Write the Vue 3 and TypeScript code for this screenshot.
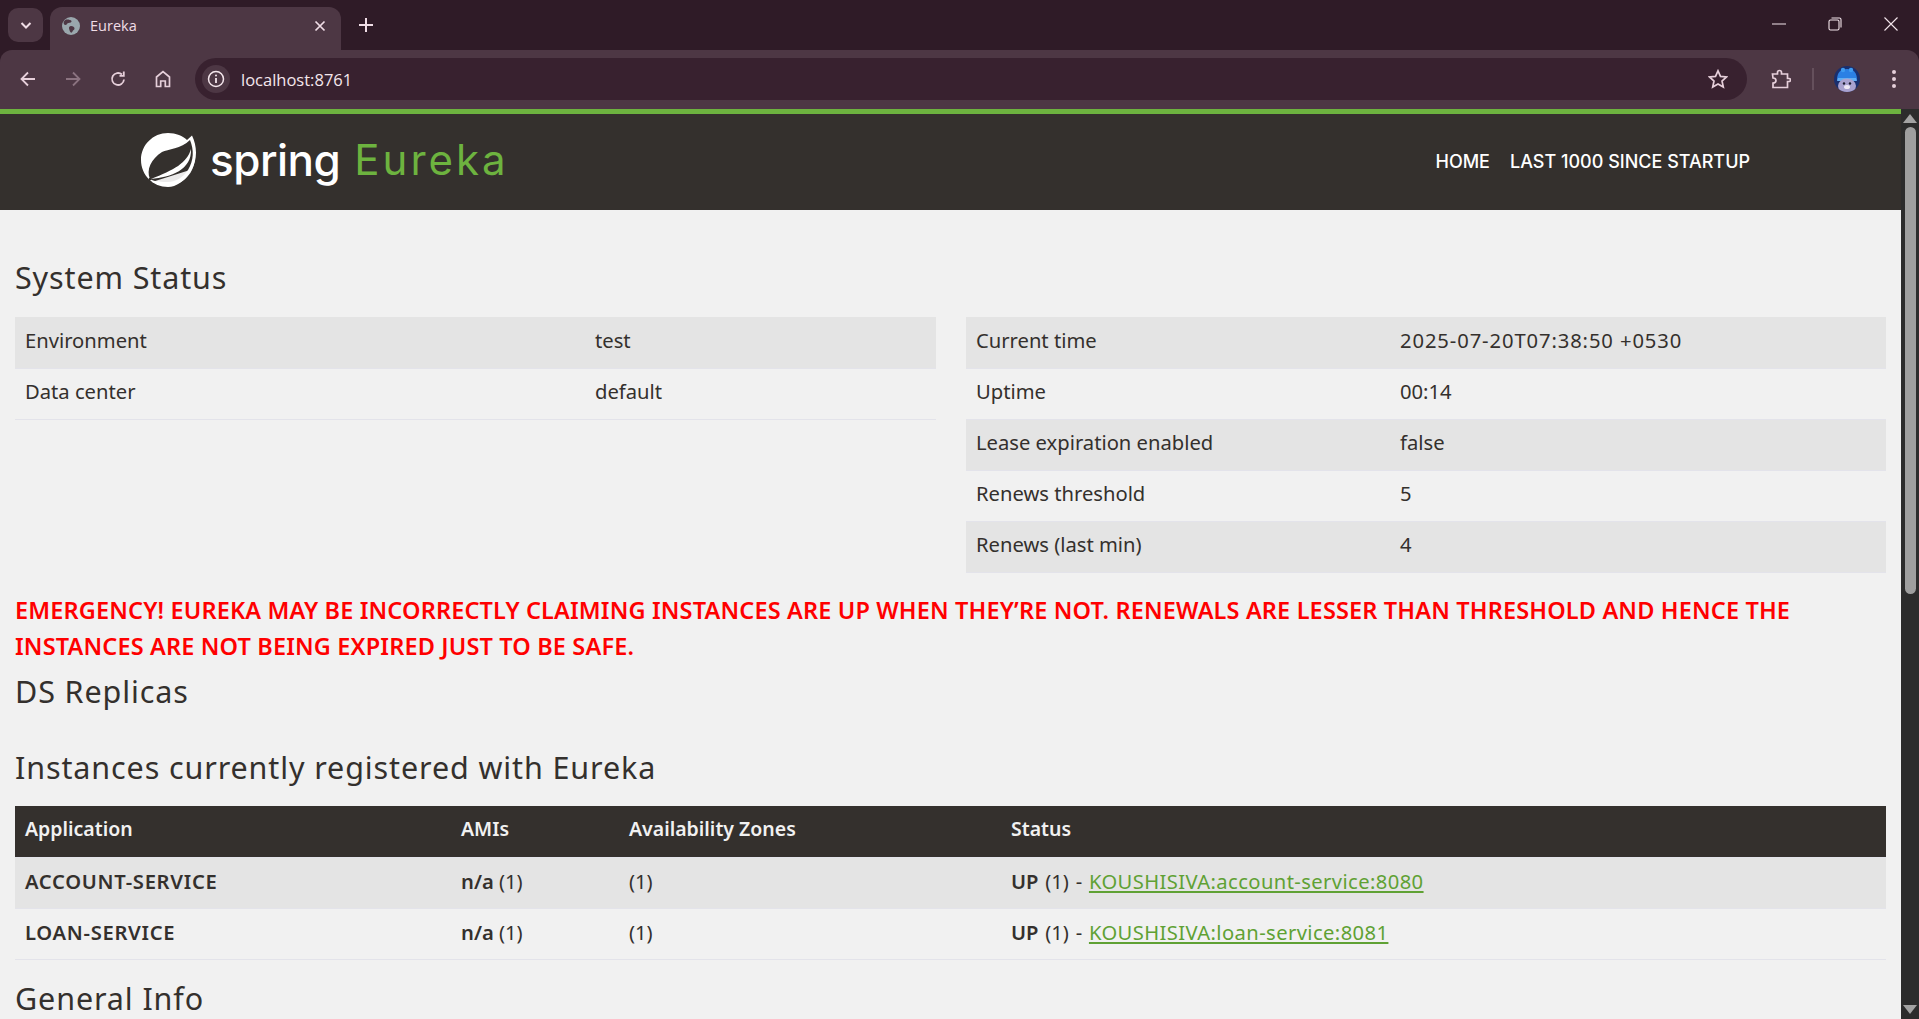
<template>
  <div class="window">
    <!-- browser chrome -->
    <div class="tabstrip">
      <button class="tab-search">
        <svg width="16" height="16" viewBox="0 0 16 16" fill="none" stroke="#f0dde6" stroke-width="2"><path d="M3.500 6 8 10.500 12.500 6" /></svg>
      </button>
      <div class="tab">
        <svg class="favicon" width="18" height="18" viewBox="0 0 18 18">
          <circle cx="9" cy="9" r="9" fill="#9aa7ad" />
          <path d="M5 2.500c2 0 4 .5 4.500 1.500S8 6 6.500 6 5 8 3.500 8 1 6 2 4.500 3.500 2.500 5 2.500ZM9 9c2 0 3.500 1 3.500 2.500S11 13 10.500 14.500 8.500 16 8 14.500 7 12 7 11s.5-2 2-2Z" fill="#4d3744" />
        </svg>
        <span class="tab-title">Eureka</span>
        <svg class="tab-close" width="12" height="12" viewBox="0 0 12 12" stroke="#f0dde6" stroke-width="1.700"><path d="M1.500 1.500 10.500 10.500M10.500 1.500 1.500 10.500" /></svg>
      </div>
      <svg class="new-tab" width="14" height="14" viewBox="0 0 14 14" stroke="#f0dde6" stroke-width="2"><path d="M7 0v14M0 7h14" /></svg>
      <div class="window-controls">
        <svg width="14" height="14" viewBox="0 0 14 14" stroke="#f4e6ec" stroke-width="1"><path d="M0 7h14" /></svg>
        <svg width="14" height="14" viewBox="0 0 14 14" fill="none" stroke="#f4e6ec" stroke-width="1.100"><rect x="1" y="3" width="10" height="10" rx="1.500" /><path d="M3.500 1h8a1.500 1.500 0 0 1 1.500 1.500v8" /></svg>
        <svg width="14" height="14" viewBox="0 0 14 14" stroke="#f4e6ec" stroke-width="1.100"><path d="M.5.500l13 13M13.500.5l-13 13" /></svg>
      </div>
    </div>

    <div class="toolbar">
      <div class="nav-icons">
        <svg width="18" height="18" viewBox="0 0 18 18" fill="none" stroke="#e6cfda" stroke-width="1.800"><path d="M16 9H2.500M9 2.500 2.500 9 9 15.500" /></svg>
        <svg width="18" height="18" viewBox="0 0 18 18" fill="none" stroke="#8b7380" stroke-width="1.800"><path d="M2 9h13.500M9 2.500 15.500 9 9 15.500" /></svg>
        <svg width="18" height="18" viewBox="0 0 18 18" fill="none" stroke="#e6cfda" stroke-width="1.800"><path d="M15 9.500A6 6 0 1 1 13 4.500" /><path d="M14.800 1.500v4.300h-4.300" /></svg>
        <svg width="18" height="18" viewBox="0 0 18 18" fill="none" stroke="#e6cfda" stroke-width="1.700"><path d="M2.500 16.500V7L9 1.500 15.500 7v9.500h-4.200v-5.500H6.700v5.500Z" /></svg>
      </div>
      <div class="omnibox">
        <span class="site-info">
          <svg width="18" height="18" viewBox="0 0 18 18" fill="none" stroke="#f4e6ec" stroke-width="1.500"><circle cx="9" cy="9" r="7.500" /><path d="M9 8v5" stroke-width="1.800" /><circle cx="9" cy="5.500" r="1" fill="#f4e6ec" stroke="none" /></svg>
        </span>
        <span class="url">localhost:8761</span>
        <svg class="star" width="20" height="20" viewBox="0 0 20 20" fill="none" stroke="#e6cfda" stroke-width="1.700"><path d="M10 1.800l2.500 5.600 6 .6-4.500 4 1.300 6L10 15l-5.300 3 1.300-6-4.500-4 6-.6Z" /></svg>
      </div>
      <div class="toolbar-right">
        <svg width="20" height="20" viewBox="0 0 20 20" fill="none" stroke="#e6cfda" stroke-width="1.700"><path d="M1.500 5h5V3.500a2 2 0 0 1 4 0V5h6v4.500h1.500a1.500 1.500 0 0 1 0 3H16.500V18.500H2v-4.500c2 0 3-1 3-2.500S3.500 9 2 9Z" /></svg>
        <span class="divider"></span>
        <svg class="avatar" width="26" height="26" viewBox="0 0 26 26">
          <defs><clipPath id="avatar-clip"><circle cx="13" cy="13" r="13" /></clipPath></defs>
          <g clip-path="url(#avatar-clip)">
            <rect width="26" height="26" fill="#1a2f6e" />
            <path d="M3 14C3 6 7 3 13 3s10 3 10 11Z" fill="#2b80e4" />
            <circle cx="9" cy="4" r="2.200" fill="#3f9bf0" />
            <circle cx="17" cy="4" r="2.200" fill="#3f9bf0" />
            <path d="M4 12h18l1 3H3Z" fill="#63aef2" />
            <ellipse cx="13" cy="20" rx="9" ry="7.500" fill="#a9a2cf" />
            <circle cx="10" cy="17.500" r="1.200" fill="#1c1c2e" />
            <circle cx="16" cy="17.500" r="1.200" fill="#1c1c2e" />
            <ellipse cx="13" cy="21" rx="3" ry="2" fill="#eee8f5" />
          </g>
        </svg>
        <svg class="menu-dots" width="6" height="20" viewBox="0 0 6 20" fill="#e6cfda"><circle cx="3" cy="3" r="2" /><circle cx="3" cy="10" r="2" /><circle cx="3" cy="17" r="2" /></svg>
      </div>
    </div>

    <div class="viewport">
      <div class="page">
        <header class="site-header">
          <div class="logo">
            <svg class="leaf" width="56" height="56" viewBox="0 0 56 56">
              <path d="M27 1C35 1 42 4 46 8L51 3.500C56 14 57 27 50 39 44 49 35 55 27 55 12 55 0 43 0 28 0 13 12 1 27 1Z" fill="#fff" />
              <path d="M9 47C5 38 10 27 21 20 27 17 40 17 49 8 53 18 53 28 47 38 42 46 34 50 27 50 21 50 14 50 9 47Z" fill="#34302d" />
              <path d="M50 17C46 31 33 38 10 47 30 45 51 38 50 17Z" fill="#fff" />
              <path d="M11 50 49 38 54 24C54 36 48 47 36 52L24 54Z" fill="#fff" opacity="0.900" />
              <circle cx="9" cy="47" r="1.300" fill="#34302d" />
            </svg>
            <span class="logo-spring">spring</span>
            <span class="logo-eureka">Eureka</span>
          </div>
          <nav class="site-nav">
            <a>HOME</a>
            <a>LAST 1000 SINCE STARTUP</a>
          </nav>
        </header>

        <main class="content">
          <h1>System Status</h1>
          <div class="status-grid">
            <table class="data-table env-table">
              <tbody>
                <tr v-for="row in envRows" :key="row[0]">
                  <td>{{ row[0] }}</td>
                  <td>{{ row[1] }}</td>
                </tr>
              </tbody>
            </table>
            <table class="data-table time-table">
              <tbody>
                <tr v-for="row in timeRows" :key="row[0]">
                  <td>{{ row[0] }}</td>
                  <td>{{ row[1] }}</td>
                </tr>
              </tbody>
            </table>
          </div>

          <h4 class="emergency">EMERGENCY! EUREKA MAY BE INCORRECTLY CLAIMING INSTANCES ARE UP WHEN THEY’RE NOT. RENEWALS ARE LESSER THAN THRESHOLD AND HENCE THE INSTANCES ARE NOT BEING EXPIRED JUST TO BE SAFE.</h4>

          <h1 class="ds-title">DS Replicas</h1>
          <h1 class="instances-title">Instances currently registered with Eureka</h1>

          <table class="data-table instances">
            <thead>
              <tr>
                <th>Application</th>
                <th>AMIs</th>
                <th>Availability Zones</th>
                <th>Status</th>
              </tr>
            </thead>
            <tbody>
              <tr v-for="app in apps" :key="app.name">
                <td><b class="app-name">{{ app.name }}</b></td>
                <td><b>n/a</b> (1)</td>
                <td>(1)</td>
                <td class="status-cell"><b>UP</b> (1) - <a class="instance-link">{{ app.instance }}</a></td>
              </tr>
            </tbody>
          </table>

          <h1 class="general-title">General Info</h1>
        </main>
      </div>

      <div class="scrollbar">
        <svg width="14" height="9" viewBox="0 0 14 9" fill="#a3a3a3"><path d="M7 0 14 9H0Z" /></svg>
        <div class="scroll-track"><div class="scroll-thumb"></div></div>
        <svg width="14" height="9" viewBox="0 0 14 9" fill="#a3a3a3"><path d="M0 0h14L7 9Z" /></svg>
      </div>
    </div>
  </div>
</template>

<script setup lang="ts">
interface AppRow {
  name: string
  instance: string
}

const envRows: string[][] = [
  ['Environment', 'test'],
  ['Data center', 'default'],
]

const timeRows: string[][] = [
  ['Current time', '2025-07-20T07:38:50 +0530'],
  ['Uptime', '00:14'],
  ['Lease expiration enabled', 'false'],
  ['Renews threshold', '5'],
  ['Renews (last min)', '4'],
]

const apps: AppRow[] = [
  { name: 'ACCOUNT-SERVICE', instance: 'KOUSHISIVA:account-service:8080' },
  { name: 'LOAN-SERVICE', instance: 'KOUSHISIVA:loan-service:8081' },
]
</script>

<style>
html, body {
  margin: 0;
  overflow: hidden;
}
</style>

<style scoped>
.window {
  height: 100vh;
  display: flex;
  flex-direction: column;
  overflow: hidden;
  background: #2f1b27;
  font-family: "Noto Sans", "Open Sans", sans-serif;
}

/* chrome */
.tabstrip {
  height: 50px;
  flex: none;
  display: flex;
  align-items: flex-start;
  padding-left: 8px;
  background: #2f1b27;
}
.tab-search {
  width: 35px;
  height: 34px;
  margin-top: 8px;
  padding: 0;
  border: 0;
  border-radius: 10px;
  background: #4d3744;
  display: flex;
  align-items: center;
  justify-content: center;
}
.tab {
  width: 291px;
  height: 43px;
  margin: 7px 0 0 7px;
  padding: 0 15px 6px 12px;
  box-sizing: border-box;
  border-radius: 12px 12px 0 0;
  background: #4d3744;
  display: flex;
  align-items: center;
}
.tab-title {
  margin-left: 10px;
  flex: 1;
  font: 14.500px "Open Sans", "Noto Sans", sans-serif;
  color: #f0dde6;
}
.new-tab {
  margin: 18px 0 0 18px;
}
.window-controls {
  margin: 17px 21px 0 auto;
  display: flex;
  gap: 42px;
}
.toolbar {
  height: 59px;
  flex: none;
  box-sizing: border-box;
  padding: 8px 0 9px 19px;
  border-radius: 12px 12px 0 0;
  background: #4d3744;
  display: flex;
  align-items: center;
}
.nav-icons {
  width: 176px;
  flex: none;
  display: flex;
  gap: 27px;
}
.omnibox {
  width: 1552px;
  height: 42px;
  flex: none;
  box-sizing: border-box;
  padding: 0 19px 0 7px;
  border-radius: 21px;
  background: #38212f;
  display: flex;
  align-items: center;
}
.site-info {
  width: 28px;
  height: 28px;
  border-radius: 50%;
  background: #4d3744;
  display: flex;
  align-items: center;
  justify-content: center;
}
.url {
  margin-left: 11px;
  flex: 1;
  font: 16.500px "Open Sans", "Noto Sans", sans-serif;
  color: #f4e6ec;
}
.toolbar-right {
  flex: 1;
  padding-left: 24px;
  display: flex;
  align-items: center;
}
.divider {
  width: 2px;
  height: 22px;
  margin: 0 20px 0 21px;
  background: #65505c;
}
.menu-dots {
  margin-left: 31px;
}

/* page */
.viewport {
  flex: 1;
  min-height: 0;
  display: flex;
}
.page {
  flex: 1;
  min-width: 0;
  overflow: hidden;
  background: #f1f1f1;
  color: #34302d;
}
.site-header {
  height: 101px;
  box-sizing: border-box;
  border-top: 5px solid #6db33f;
  padding: 0 151px 0 141px;
  background: #34302d;
  display: flex;
  align-items: center;
  justify-content: space-between;
}
.logo {
  display: flex;
  align-items: center;
  padding-bottom: 4px;
}
.logo-spring {
  margin-left: 13px;
  font: 500 44px Inter, sans-serif;
  letter-spacing: -0.5px;
  color: #fff;
}
.logo-eureka {
  margin-left: 14px;
  padding-bottom: 2px;
  font: 400 42px Inter, sans-serif;
  letter-spacing: 3px;
  color: #6db33f;
}
.site-nav {
  display: flex;
  gap: 20px;
  padding-bottom: 2px;
  font: 500 18px Inter, sans-serif;
  color: #fff;
}
.content {
  padding: 0 15px;
}
h1 {
  margin: 0;
  font-weight: 400;
  font-size: 30.500px;
  letter-spacing: 0.880px;
  line-height: 40px;
}
.content > h1:first-child {
  margin-top: 47px;
}
.status-grid {
  margin-top: 20px;
  display: flex;
  justify-content: space-between;
  align-items: flex-start;
}
.data-table {
  border-collapse: collapse;
  font-size: 20.200px;
}
.data-table td,
.data-table th {
  height: 51px;
  padding: 0 10px 5px;
  box-sizing: border-box;
  text-align: left;
  border-bottom: 1px solid #e3e3ea;
}
.data-table tbody tr:nth-child(odd) {
  background: #e4e4e4;
}
.env-table {
  width: 921px;
}
.env-table td:first-child {
  width: 570px;
}
.time-table {
  width: 920px;
}
.time-table td:first-child {
  width: 424px;
}
.time-table tr:first-child td:last-child {
  letter-spacing: 0.900px;
}
.emergency {
  margin: 19px 0 0;
  font-size: 23.500px;
  font-weight: 600;
  letter-spacing: 0.150px;
  line-height: 36px;
  color: #f00;
}
.ds-title {
  margin-top: 7px;
}
.instances-title {
  margin-top: 36px;
}
.instances {
  width: 100%;
  margin-top: 19px;
  table-layout: fixed;
}
.instances th {
  height: 52px;
  background: #34302d;
  color: #f1f1f1;
  font-size: 19.500px;
  font-weight: 600;
}
.instances th:nth-child(1) { width: 436px; }
.instances th:nth-child(2) { width: 168px; }
.instances th:nth-child(3) { width: 382px; }
.instances b {
  font-weight: 600;
}
.app-name {
  letter-spacing: 0.700px;
}
.status-cell {
  word-spacing: 1.500px;
}
.instance-link {
  color: #5fa134;
  letter-spacing: 0.400px;
  text-decoration: underline;
}
.general-title {
  margin-top: 18px;
}

/* scrollbar */
.scrollbar {
  width: 18px;
  flex: none;
  padding: 5px 0;
  box-sizing: border-box;
  background: #2c2c2c;
  display: flex;
  flex-direction: column;
  align-items: center;
}
.scroll-track {
  flex: 1;
  width: 100%;
  padding: 4px 2px;
  box-sizing: border-box;
}
.scroll-thumb {
  width: 11px;
  height: 467px;
  margin: 0 auto;
  border-radius: 6px;
  background: #9f9f9f;
}
</style>
